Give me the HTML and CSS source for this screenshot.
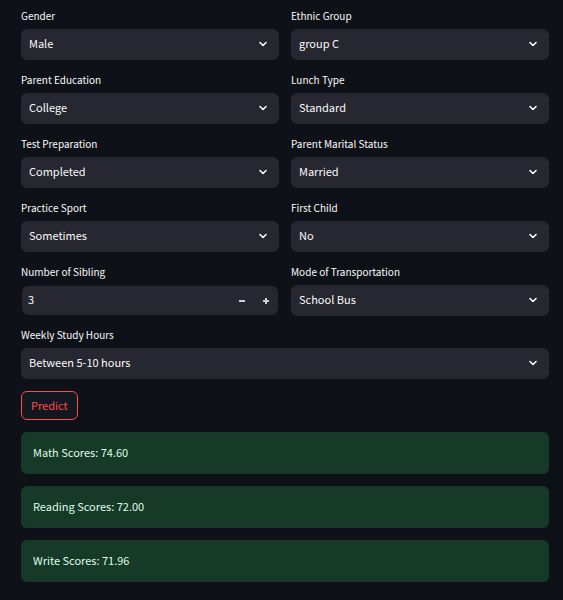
FILE: index.html
```
<!DOCTYPE html>
<html lang="en">
<head>
<meta charset="utf-8">
<meta name="viewport" content="width=device-width, initial-scale=1">
<title>Student Score Prediction</title>
<link rel="stylesheet" href="styles.css">
</head>
<body>
<svg class="symbols">
  <symbol id="chevron" viewBox="0 0 8 8"><path d="M1 2.5 4 5.5 7 2.5" fill="none" stroke="currentColor" stroke-width="1.6" stroke-linecap="round" stroke-linejoin="round"/></symbol>
</svg>
<main class="page">
  <form class="form">
    <div class="grid">
      <div class="field">
        <label for="gender">Gender</label>
        <div class="select"><select id="gender"><option>Male</option></select><svg class="chevron"><use href="#chevron"/></svg></div>
      </div>
      <div class="field">
        <label for="ethnic">Ethnic Group</label>
        <div class="select"><select id="ethnic"><option>group C</option></select><svg class="chevron"><use href="#chevron"/></svg></div>
      </div>
      <div class="field">
        <label for="education">Parent Education</label>
        <div class="select"><select id="education"><option>College</option></select><svg class="chevron"><use href="#chevron"/></svg></div>
      </div>
      <div class="field">
        <label for="lunch">Lunch Type</label>
        <div class="select"><select id="lunch"><option>Standard</option></select><svg class="chevron"><use href="#chevron"/></svg></div>
      </div>
      <div class="field">
        <label for="prep">Test Preparation</label>
        <div class="select"><select id="prep"><option>Completed</option></select><svg class="chevron"><use href="#chevron"/></svg></div>
      </div>
      <div class="field">
        <label for="marital">Parent Marital Status</label>
        <div class="select"><select id="marital"><option>Married</option></select><svg class="chevron"><use href="#chevron"/></svg></div>
      </div>
      <div class="field">
        <label for="sport">Practice Sport</label>
        <div class="select"><select id="sport"><option>Sometimes</option></select><svg class="chevron"><use href="#chevron"/></svg></div>
      </div>
      <div class="field">
        <label for="first">First Child</label>
        <div class="select"><select id="first"><option>No</option></select><svg class="chevron"><use href="#chevron"/></svg></div>
      </div>
      <div class="field">
        <label for="sibling">Number of Sibling</label>
        <div class="number">
          <input id="sibling" type="number" value="3">
          <button type="button" class="step" aria-label="Decrease"><svg viewBox="0 0 8 8"><path d="M1 4h6" stroke="currentColor" stroke-width="2"/></svg></button>
          <button type="button" class="step" aria-label="Increase"><svg viewBox="0 0 8 8"><path d="M1 4h6M4 1v6" stroke="currentColor" stroke-width="2"/></svg></button>
        </div>
      </div>
      <div class="field">
        <label for="transport">Mode of Transportation</label>
        <div class="select"><select id="transport"><option>School Bus</option></select><svg class="chevron"><use href="#chevron"/></svg></div>
      </div>
    </div>
    <div class="field">
      <label for="hours">Weekly Study Hours</label>
      <div class="select"><select id="hours"><option>Between 5-10 hours</option></select><svg class="chevron"><use href="#chevron"/></svg></div>
    </div>
    <button type="button" class="predict">Predict</button>
  </form>
  <p class="result">Math Scores: 74.60</p>
  <p class="result">Reading Scores: 72.00</p>
  <p class="result">Write Scores: 71.96</p>
</main>
</body>
</html>
```
FILE: styles.css
```
* {
  box-sizing: border-box;
}

body {
  margin: 0;
  background: #0e1117;
  color: #fafafa;
  font: 11px/16px "Source Sans Pro", "Noto Sans CJK JP", "Noto Sans", sans-serif;
}

.symbols {
  display: none;
}

.page,
.form {
  display: flex;
  flex-direction: column;
  gap: 12px;
}

.page {
  padding: 9px 14px 18px 21px;
}

.grid {
  display: grid;
  grid-template-columns: 1fr 1fr;
  gap: 13px 12px;
}

.field label {
  display: block;
  height: 20px;
  font-size: 10px;
  line-height: 13px;
}

.select {
  display: grid;
  align-items: center;
}

.select > * {
  grid-area: 1 / 1;
}

select,
input,
button {
  margin: 0;
  border: 0;
  color: inherit;
  font: inherit;
}

select {
  appearance: none;
  width: 100%;
  height: 31px;
  padding: 0 28px 4px 8px;
  border-radius: 6px;
  background: #262730;
}

.chevron {
  justify-self: end;
  width: 8px;
  height: 8px;
  margin: 0 12px 2px 0;
  pointer-events: none;
}

.number {
  display: flex;
  height: 31px;
  border: 1px solid #0e1117;
  border-radius: 7px;
  background: #262730;
  background-clip: padding-box;
}

.number input {
  flex: 1;
  min-width: 0;
  padding: 0 6px 4px;
  background: none;
  appearance: textfield;
}

.number input::-webkit-inner-spin-button {
  appearance: none;
}

.step {
  display: grid;
  place-items: center;
  width: 24px;
  padding: 0;
  background: none;
  color: #d0d0d4;
}

.step svg {
  width: 8px;
  height: 8px;
}

.predict {
  align-self: flex-start;
  height: 29px;
  padding: 0 9px 2px;
  border: 1px solid #ff4b4b;
  border-radius: 6px;
  background: #131720;
  color: #ff4b4b;
}

.result {
  margin: 0;
  padding: 12px 12px 14px;
  border-radius: 6px;
  background: #173928;
  color: #dffde9;
}
```
